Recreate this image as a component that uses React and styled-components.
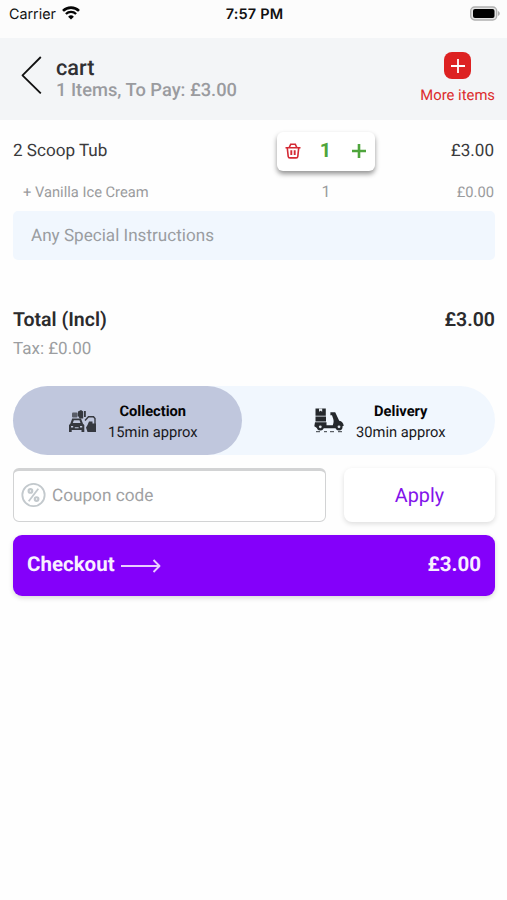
import React from "react";
import styled, { createGlobalStyle } from "styled-components";

const GlobalStyle = createGlobalStyle`
  * {
    box-sizing: border-box;
  }
  body {
    margin: 0;
    background-color: #fefefe;
    font-family: Roboto, "Liberation Sans", sans-serif;
    color: #303033;
    text-rendering: geometricPrecision;
  }
  svg {
    display: block;
    flex-shrink: 0;
  }
  button, input {
    font-family: inherit;
    text-rendering: inherit;
    border: none;
    padding: 0;
    margin: 0;
    background: none;
  }
`;

const Screen = styled.div`
  width: 507px;
  min-height: 900px;
`;

const StatusBar = styled.div`
  display: grid;
  grid-template-columns: 1fr auto 1fr;
  align-items: center;
  height: 38px;
  padding: 1px 7px 11px 9px;
  background-color: #fcfcfc;
  font-family: Inter, "Liberation Sans", sans-serif;
  color: #111;
`;

const CarrierLabel = styled.div`
  display: flex;
  align-items: center;
  gap: 6px;
  font-size: 14.3px;

  svg {
    margin-bottom: 2px;
  }
`;

const TimeLabel = styled.div`
  font-size: 14.5px;
  font-weight: 600;
  letter-spacing: 0.2px;
`;

const BatteryContainer = styled.div`
  display: flex;
  justify-content: flex-end;
  padding-bottom: 1px;
`;

const Header = styled.header`
  display: flex;
  align-items: flex-start;
  height: 82px;
  padding: 14px 12px 0 21px;
  background-color: #f3f5f7;
`;

const BackButton = styled.button`
  margin-top: 4px;
`;

const HeaderText = styled.div`
  flex: 1;
  padding: 5px 0 0 14px;
`;

const Title = styled.h1`
  margin: 0;
  font-size: 21.7px;
  line-height: 24px;
  font-weight: 500;
`;

const Subtitle = styled.p`
  margin: 0;
  font-size: 18.3px;
  line-height: 20px;
  font-weight: 500;
  color: #9a9b9f;
`;

const MoreItemsButton = styled.button`
  display: flex;
  flex-direction: column;
  align-items: center;
  font-size: 14.8px;
  line-height: 18px;
  color: #dc2b2b;
`;

const PlusBadge = styled.span`
  display: flex;
  align-items: center;
  justify-content: center;
  width: 27px;
  height: 27px;
  margin-bottom: 7px;
  border-radius: 8px;
  background-color: #dd2222;
`;

const Content = styled.main`
  padding: 11px 12px 0 13px;
`;

const ItemRow = styled.div`
  display: grid;
  grid-template-columns: 1fr 98px 120px;
  align-items: center;
  height: ${(props) => (props.$option ? "42px" : "38px")};
  padding-left: ${(props) => (props.$option ? "10px" : "0")};
  font-size: ${(props) => (props.$option ? "14.7px" : "17.1px")};
  color: ${(props) => (props.$option ? "#9a9b9d" : "#3a3a3c")};
`;

const ItemName = styled.span`
  margin-top: ${(props) => (props.$option ? "3px" : "-1px")};
`;

const ItemPrice = styled(ItemName)`
  padding-right: 1px;
  text-align: right;
`;

const OptionCount = styled.span`
  padding-top: 2px;
  text-align: center;
  font-size: 16px;
`;

const QuantityStepper = styled.div`
  display: grid;
  grid-template-columns: 32px 33px 33px;
  align-items: center;
  justify-items: center;
  height: 39px;
  margin-top: 1px;
  padding-bottom: 1px;
  border-radius: 6px;
  background-color: #fff;
  box-shadow: 0 3px 5px rgba(0, 0, 0, 0.42);
`;

const Quantity = styled.span`
  margin-top: -2px;
  font-size: 20px;
  font-weight: 700;
  color: #4fa53c;
`;

const InstructionsInput = styled.input`
  display: block;
  width: 100%;
  height: 49px;
  padding: 1px 18px 0;
  border-radius: 5px;
  background-color: #f1f7fe;
  font-size: 17.1px;

  &::placeholder {
    color: #9a9da1;
    opacity: 1;
  }
`;

const TotalRow = styled.div`
  display: flex;
  justify-content: space-between;
  margin-top: 47px;
  font-size: 19.5px;
  line-height: 25px;
  font-weight: 600;
  color: #2b2b2d;
`;

const TaxLabel = styled.div`
  margin-top: 7px;
  font-size: 17px;
  line-height: 20px;
  color: #9c9ea1;
`;

const MethodToggle = styled.div`
  display: flex;
  height: 69px;
  margin-top: 27px;
  border-radius: 35px;
  background-color: #f1f7fe;
`;

const MethodOption = styled.button`
  display: flex;
  align-items: center;
  gap: 12px;
  width: ${(props) => (props.$active ? "229px" : "253px")};
  padding-left: ${(props) => (props.$active ? "56px" : "72px")};
  border-radius: 35px;
  background-color: ${(props) => (props.$active ? "#c0c7dd" : "transparent")};
`;

const MethodText = styled.span`
  display: flex;
  flex-direction: column;
  align-items: center;
  padding-top: 2px;
  font-size: 14.7px;
  line-height: 21px;
  color: #19191c;

  strong {
    font-weight: 700;
    color: #050506;
  }
`;

const CouponRow = styled.div`
  display: flex;
  gap: 18px;
  margin-top: 13px;
`;

const CouponField = styled.label`
  display: flex;
  align-items: center;
  gap: 6px;
  width: 313px;
  height: 54px;
  padding: 0 7px 2px;
  border: 1px solid #d2d3d4;
  border-top-width: 3px;
  border-radius: 6px;
  background-color: #fff;
`;

const CouponInput = styled.input`
  flex: 1;
  min-width: 0;
  padding-top: 1px;
  font-size: 17.2px;

  &::placeholder {
    color: #a0a1a3;
    opacity: 1;
  }
`;

const ApplyButton = styled.button`
  flex: 1;
  height: 54px;
  border-radius: 8px;
  background-color: #fff;
  box-shadow: 0 2px 5px rgba(0, 0, 0, 0.13);
  font-size: 19.8px;
  color: #8213ea;
`;

const CheckoutButton = styled.button`
  display: flex;
  align-items: center;
  width: 100%;
  height: 61px;
  margin-top: 13px;
  padding: 0 14px 1px;
  border-radius: 9px;
  background-color: #8400fa;
  box-shadow: 0 2px 5px rgba(0, 0, 0, 0.15);
  font-size: 20.5px;
  font-weight: 700;
  color: #f8efff;

  svg {
    margin: 2px auto 0 6px;
  }
`;

const WifiIcon = () => (
  <svg width="18" height="14" viewBox="0 0 18 14" fill="none" stroke="#050505">
    <path d="M1 4.9a11.4 11.4 0 0 1 16 0" strokeWidth="2.6" />
    <path d="M3.9 8a7.2 7.2 0 0 1 10.2 0" strokeWidth="2.3" />
    <path d="M9 13.6 6.1 10.7a4.1 4.1 0 0 1 5.8 0z" fill="#050505" stroke="none" />
  </svg>
);

const BatteryIcon = () => (
  <svg width="31" height="15" viewBox="0 0 31 15">
    <rect x="1.7" y="1" width="26" height="13" rx="4" fill="#e4e4e4" stroke="#b0b0b0" strokeWidth="1.4" />
    <rect x="4" y="3" width="21.5" height="9" rx="2" fill="#000" />
    <path d="M29 5v5c1-.4 1.8-1.4 1.8-2.5S30 5.4 29 5z" fill="#adadad" />
  </svg>
);

const BackIcon = () => (
  <svg width="21" height="38" viewBox="0 0 21 38" fill="none" stroke="#111" strokeWidth="1.8">
    <path d="M19.8 1 1.5 19.3l18.3 18.1" strokeLinejoin="round" />
  </svg>
);

const PlusIcon = ({ size, color, width }) => (
  <svg width={size} height={size} viewBox="0 0 14 14" stroke={color} strokeWidth={width}>
    <path d="M7 0v14M0 7h14" />
  </svg>
);

const TrashIcon = () => (
  <svg width="16" height="16" viewBox="0 0 16 16" fill="none" stroke="#d42a35" strokeWidth="1.6">
    <path d="M.5 4.8h15M4.2 4.5l1.5-3.2h4.6l1.5 3.2" />
    <path d="M2.3 5l.9 8.3c.1 1 .7 1.600 1.700 1.600h6.200c1 0 1.600-.6 1.700-1.600l.9-8.300" />
    <path d="M6.3 7.3v4.600M9.700 7.300v4.600" strokeWidth="1.9" />
  </svg>
);

const CollectionIcon = () => (
  <svg width="27" height="24" viewBox="0 0 27 24" fill="#35383f">
    <rect x="3" y="3.5" width="5.5" height="5" rx="1" opacity="0.75" />
    <path d="M9 2.5l3-1.5 2.2 1.5v7h-3.500l-2-3zM15 2h1.800v6H15z" />
    <path d="M3.2 9.5h8.8l2 5.2 1.3 1.3v7h-2.800v-2H2.700v2H0v-7l1.300-1.300z" />
    <path d="M4.8 11.3h5.700l1 2.700H3.800z" fill="#c0c7dd" />
    <path d="M2 17h2.200v1.500H2zM11 17h2.200v1.500H11zM5.800 18.300h3.800v.9H5.800z" fill="#c0c7dd" />
    <path d="M16 11.5l3.500-3.800h5l1.500 1.800v7" fill="none" stroke="#35383f" strokeWidth="1.4" />
    <path d="M20 12.500h3.500v2H27V23h-8.500L17 18.500l1.500-2.500z" />
  </svg>
);

const DeliveryIcon = () => (
  <svg width="30" height="25" viewBox="0 0 30 25" fill="#25282c">
    <path d="M1.5.5h10.300v7.200H1.500zM1.500 8.600H12v5H1.500z" />
    <path d="M5 .5h3.200v3.300l-1.600-1-1.600 1z" fill="#e2e7ec" />
    <path d="M1 14.200h11.500v3h6.300c1-2.500 1-4.500.4-6.400L18 7.300h-1.600V4.300h4.800l4 8.500c2.600.5 4.400 2.200 4.500 5.200H27l-1 2.300H9.500L8.500 20H3L.3 18.300z" />
    <circle cx="6.3" cy="18.8" r="3.6" />
    <circle cx="6.3" cy="18.8" r="1.4" fill="#dfe4ea" />
    <circle cx="25" cy="18.8" r="3.6" />
    <circle cx="25" cy="18.8" r="1.4" fill="#dfe4ea" />
    <path d="M2 23.700h4M10 23.700h3M16 23.700h4M24 23.700h4" stroke="#25282c" strokeWidth="0.9" />
  </svg>
);

const PercentIcon = () => (
  <svg width="25" height="26" viewBox="0 0 26 26" fill="none" stroke="#c3c9cd" strokeWidth="1.9">
    <circle cx="13" cy="13" r="11.6" />
    <path d="M18 6.5l-10 13" />
    <circle cx="9.8" cy="8.8" r="1.9" strokeWidth="2.2" />
    <circle cx="16.2" cy="17.2" r="1.9" strokeWidth="2.2" />
  </svg>
);

const ArrowIcon = () => (
  <svg width="40" height="14" viewBox="0 0 40 14" fill="none" stroke="#e9cdff" strokeWidth="1.9">
    <path d="M0 7h38.5M32.5 1l6 6-6 6" strokeLinejoin="round" />
  </svg>
);

const Method = ({ icon, title, time, active }) => (
  <MethodOption $active={active}>
    {icon}
    <MethodText>
      <strong>{title}</strong>
      <span>{time}</span>
    </MethodText>
  </MethodOption>
);

const App = () => {
  const [instructions, setInstructions] = React.useState("");
  const [coupon, setCoupon] = React.useState("");

  return (
    <Screen>
      <GlobalStyle />
      <StatusBar>
        <CarrierLabel>
          Carrier
          <WifiIcon />
        </CarrierLabel>
        <TimeLabel>7:57 PM</TimeLabel>
        <BatteryContainer>
          <BatteryIcon />
        </BatteryContainer>
      </StatusBar>
      <Header>
        <BackButton aria-label="Back">
          <BackIcon />
        </BackButton>
        <HeaderText>
          <Title>cart</Title>
          <Subtitle>1 Items, To Pay: £3.00</Subtitle>
        </HeaderText>
        <MoreItemsButton>
          <PlusBadge>
            <PlusIcon size={14} color="#fff" width={1.8} />
          </PlusBadge>
          More items
        </MoreItemsButton>
      </Header>
      <Content>
        <ItemRow>
          <ItemName>2 Scoop Tub</ItemName>
          <QuantityStepper>
            <TrashIcon />
            <Quantity>1</Quantity>
            <PlusIcon size={14} color="#4fa53c" width={2.6} />
          </QuantityStepper>
          <ItemPrice>£3.00</ItemPrice>
        </ItemRow>
        <ItemRow $option>
          <ItemName $option>+ Vanilla Ice Cream</ItemName>
          <OptionCount>1</OptionCount>
          <ItemPrice $option>£0.00</ItemPrice>
        </ItemRow>
        <InstructionsInput
          placeholder="Any Special Instructions"
          value={instructions}
          onChange={(e) => setInstructions(e.target.value)}
        />
        <TotalRow>
          <span>Total (Incl)</span>
          <span>£3.00</span>
        </TotalRow>
        <TaxLabel>Tax: £0.00</TaxLabel>
        <MethodToggle>
          <Method active icon={<CollectionIcon />} title="Collection" time="15min approx" />
          <Method icon={<DeliveryIcon />} title="Delivery" time="30min approx" />
        </MethodToggle>
        <CouponRow>
          <CouponField>
            <PercentIcon />
            <CouponInput
              placeholder="Coupon code"
              value={coupon}
              onChange={(e) => setCoupon(e.target.value)}
            />
          </CouponField>
          <ApplyButton>Apply</ApplyButton>
        </CouponRow>
        <CheckoutButton>
          Checkout
          <ArrowIcon />
          <span>£3.00</span>
        </CheckoutButton>
      </Content>
    </Screen>
  );
};

export default App;
